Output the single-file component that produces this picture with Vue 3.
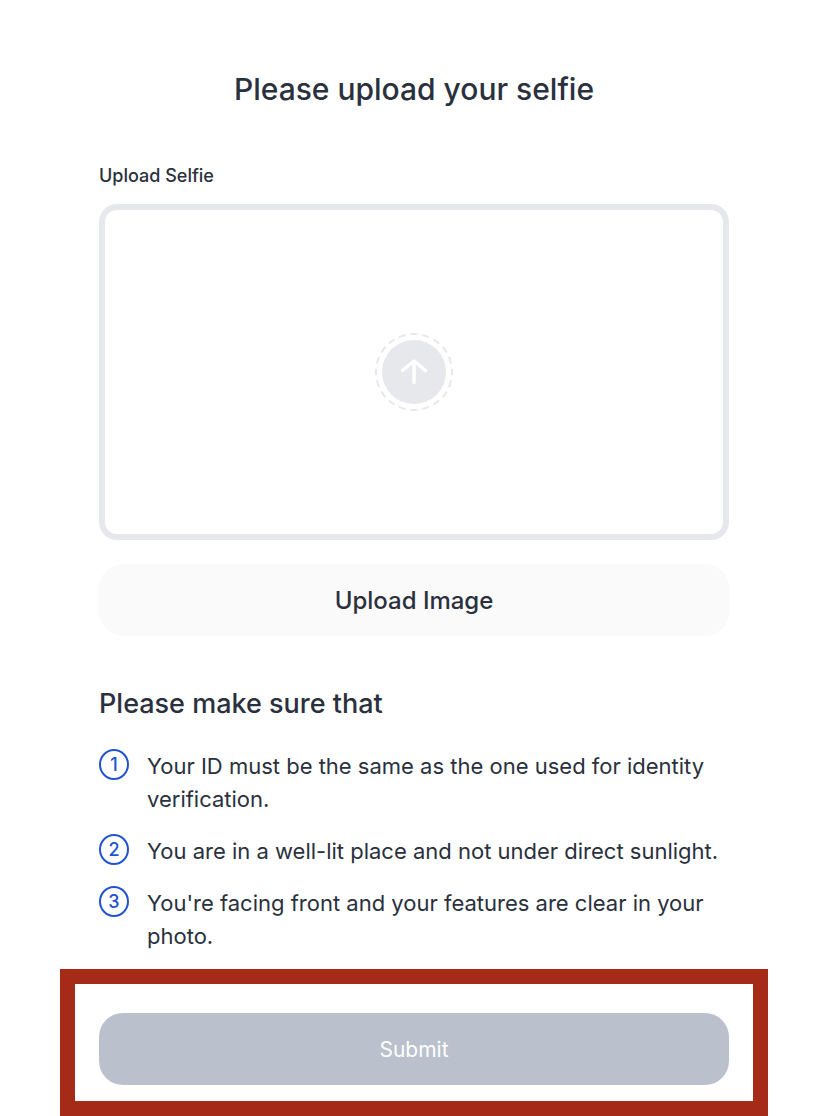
<script setup>
import { ref } from 'vue'

const fileInput = ref(null)
const requirements = [
  'Your ID must be the same as the one used for identity verification.',
  'You are in a well-lit place and not under direct sunlight.',
  "You're facing front and your features are clear in your photo.",
]
</script>

<template>
  <main class="page">
    <form class="form" @submit.prevent>
      <div class="content">
        <h1 class="title">Please upload your selfie</h1>

        <label class="label" for="selfie">Upload Selfie</label>
        <div class="dropzone">
          <svg class="upload-icon" viewBox="0 0 80 80" aria-hidden="true">
            <circle class="ring" cx="40" cy="40" r="38" pathLength="240" />
            <circle class="disc" cx="40" cy="40" r="32" />
            <path class="arrow" d="M40 50.500V29M28.500 38.500L40 29L51.500 38.500" />
          </svg>
          <input id="selfie" ref="fileInput" class="file" type="file" accept="image/*" />
        </div>
        <button class="button upload" type="button" @click="fileInput.click()">Upload Image</button>

        <h2 class="subtitle">Please make sure that</h2>
        <ol class="list">
          <li v-for="(text, i) in requirements" :key="i" class="item">
            <span class="number">{{ i + 1 }}</span>
            <span class="text">{{ text }}</span>
          </li>
        </ol>
      </div>

      <div class="highlight">
        <button class="button submit" type="submit" disabled>Submit</button>
      </div>
    </form>
  </main>
</template>

<style>
body {
  background: #ffffff;
}
</style>

<style scoped>
.page {
  box-sizing: border-box;
  padding: 68px 60px 0;
  color: #2a303d;
  font-family: Inter, "Liberation Sans", sans-serif;
}
.content {
  padding: 0 39px;
}
.title {
  margin: 0 0 54px;
  font-size: 30px;
  font-weight: 500;
  line-height: 42px;
  text-align: center;
}
.label {
  display: block;
  margin-bottom: 16px;
  font-size: 18px;
  font-weight: 500;
  line-height: 24px;
}
.dropzone {
  position: relative;
  display: flex;
  align-items: center;
  justify-content: center;
  box-sizing: border-box;
  min-height: 336px;
  border: 6px solid #e7e8ec;
  border-radius: 18px;
}
.upload-icon {
  width: 80px;
  height: 80px;
  fill: none;
}
.ring {
  stroke: #e7e8ec;
  stroke-width: 2;
  stroke-dasharray: 7 5;
  stroke-dashoffset: 3.5;
}
.disc {
  fill: #e7e8ec;
}
.arrow {
  stroke: #ffffff;
  stroke-width: 3.5;
  stroke-linecap: round;
  stroke-linejoin: round;
}
.file {
  position: absolute;
  inset: 0;
  width: 100%;
  height: 100%;
  opacity: 0;
  cursor: pointer;
}
.button {
  display: block;
  width: 100%;
  padding: 21px 20px 19px;
  border: 0;
  border-radius: 24px;
  font-family: inherit;
  line-height: 32px;
}
.upload {
  margin-top: 24px;
  background: #fafafa;
  color: #2a303d;
  font-size: 24px;
  font-weight: 500;
  cursor: pointer;
}
.subtitle {
  margin: 50px 0 27px;
  font-size: 27px;
  font-weight: 500;
  line-height: 36px;
}
.list {
  display: flex;
  flex-direction: column;
  gap: 18px;
  margin: 0;
  padding: 0;
  list-style: none;
}
.item {
  display: flex;
  align-items: flex-start;
  gap: 18px;
  font-size: 22px;
  line-height: 33px;
}
.text {
  padding-top: 1px;
}
.number {
  display: flex;
  flex: none;
  align-items: center;
  justify-content: center;
  box-sizing: border-box;
  width: 30px;
  height: 31px;
  border: 2px solid #2152d1;
  border-radius: 50%;
  color: #2152d1;
  font-size: 18px;
  font-weight: 500;
}
.highlight {
  margin-top: 16px;
  padding: 29px 24px 16px;
  border: 15px solid #a52b18;
}
.submit {
  background: #bac1cd;
  color: #ffffff;
  font-size: 21px;
}
</style>
